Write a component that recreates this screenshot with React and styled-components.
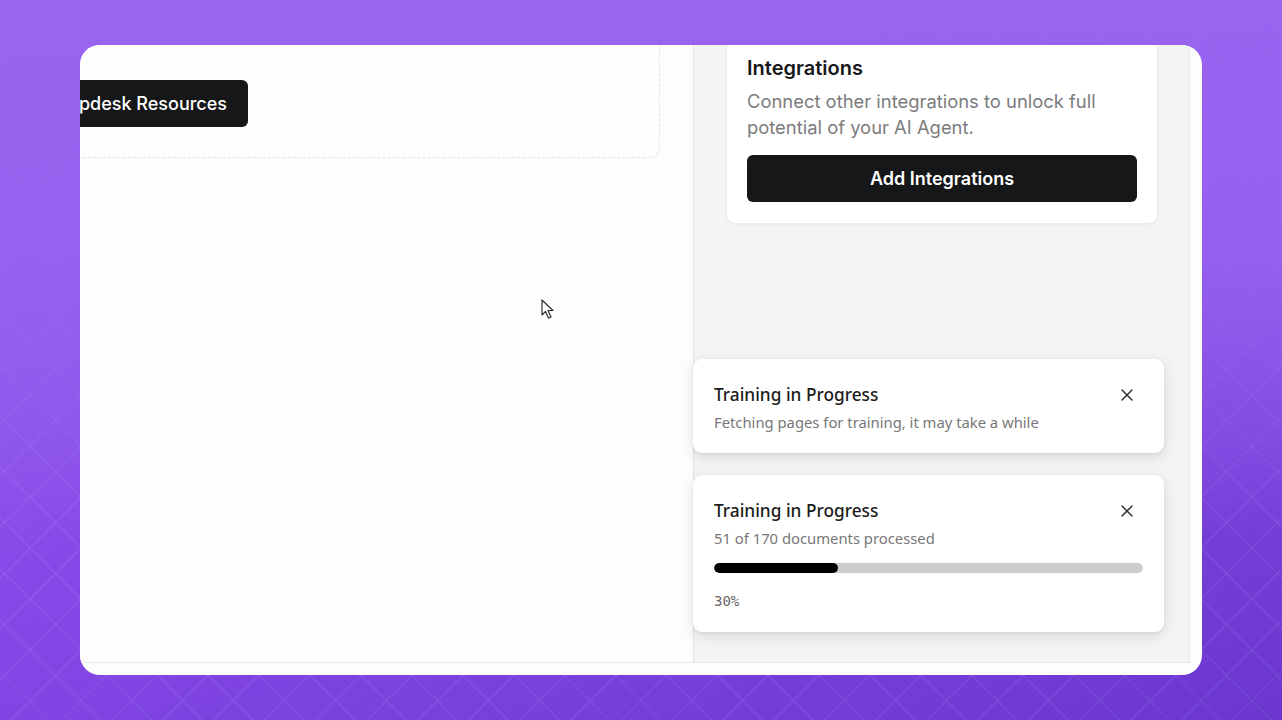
import React from 'react';
import styled, { createGlobalStyle } from 'styled-components';
import { X } from 'lucide-react';

const GlobalStyle = createGlobalStyle`
  html, body {
    margin: 0;
    padding: 0;
    width: 100%;
    height: 100%;
  }
  body {
    font-family: Inter, "Liberation Sans", sans-serif;
    background:
      linear-gradient(to bottom, rgba(152, 100, 240, 1) 0%, rgba(150, 98, 238, 0.92) 35%, rgba(140, 86, 234, 0) 75%),
      repeating-linear-gradient(45deg, transparent 0 34px, rgba(255, 255, 255, 0.05) 34px 36px),
      repeating-linear-gradient(-45deg, transparent 0 34px, rgba(255, 255, 255, 0.05) 34px 36px),
      linear-gradient(160deg, #9a66f0 0%, #8649e8 50%, #6b37cf 100%);
  }
`;

const Stage = styled.div`
  width: 1282px;
  height: 720px;
  padding: 45px 80px;
  box-sizing: border-box;
`;

const Frame = styled.div`
  width: 1122px;
  height: 630px;
  border-radius: 20px;
  background: #fdfdfd;
  overflow: hidden;
`;

const AppWindow = styled.div`
  position: relative;
  width: 1110px;
  height: 618px;
  display: flex;
  border-right: 1px solid #e6e6e6;
  border-bottom: 1px solid #e8e8e8;
  box-sizing: border-box;
  overflow: hidden;
`;

const LeftPanel = styled.div`
  position: relative;
  width: 613px;
  flex-shrink: 0;
  background: #fdfdfd;
`;

const DashedCard = styled.div`
  margin: -60px 33px 0 -100px;
  height: 173px;
  border: 1px dashed #e3e3e3;
  border-radius: 10px;
  box-sizing: border-box;
  display: flex;
  flex-direction: column;
  padding-top: 94px;
`;

const ButtonRow = styled.div`
  width: 267px;
  display: flex;
  justify-content: flex-end;
`;

const DarkButton = styled.button`
  flex-shrink: 0;
  height: 47px;
  padding: 0 21px;
  border: none;
  border-radius: 6px;
  background: #161718;
  color: #ffffff;
  font-family: Inter, "Liberation Sans", sans-serif;
  font-size: 18px;
  font-weight: ${(p) => (p.$full ? 600 : 500)};
  width: ${(p) => (p.$full ? '100%' : 'auto')};
`;

const Cursor = styled.svg`
  position: absolute;
  left: 461px;
  top: 254px;
`;

const RightPanel = styled.div`
  flex: 1;
  background: #f3f4f4;
  border-left: 1px solid #e3e3e3;
  padding: 0 31px 0 32px;
`;

const InfoCard = styled.div`
  margin-top: -20px;
  background: #ffffff;
  border: 1px solid #ececec;
  border-radius: 9px;
  box-shadow: 0 1px 3px rgba(0, 0, 0, 0.04);
  padding: 28px 20px 21px;
  display: flex;
  flex-direction: column;
`;

const CardTitle = styled.h3`
  margin: 0;
  font-size: 20px;
  line-height: 28px;
  font-weight: 600;
  color: #18191a;
`;

const CardText = styled.p`
  margin: 6px 0 15px;
  font-size: 18.4px;
  line-height: 26px;
  color: #7c7c7c;
`;

const ToastStack = styled.div`
  position: absolute;
  left: 613px;
  bottom: 30px;
  width: 471px;
  display: flex;
  flex-direction: column;
  gap: 22px;
`;

const Toast = styled.div`
  position: relative;
  background: #ffffff;
  border-radius: 9px;
  box-shadow: 0 4px 14px rgba(0, 0, 0, 0.12), 0 1px 3px rgba(0, 0, 0, 0.06);
  padding: 23px 21px 20px;
  font-family: "Noto Sans", "Open Sans", sans-serif;
`;

const ToastTitle = styled.div`
  font-size: 17.3px;
  line-height: 26px;
  font-weight: 500;
  color: #1c1c1c;
`;

const ToastText = styled.div`
  margin-top: 3px;
  font-size: 14.8px;
  line-height: 22px;
  color: #777777;
`;

const Close = styled.button`
  position: absolute;
  top: 26px;
  right: 27px;
  padding: 0;
  border: none;
  background: transparent;
  color: #333333;
  display: flex;
`;

const Track = styled.div`
  margin-top: 14px;
  height: 10px;
  border-radius: 5px;
  background: #cdcdcd;
  overflow: hidden;
`;

const Fill = styled.div`
  height: 100%;
  border-radius: 5px;
  background: #000000;
`;

const Percent = styled.div`
  margin-top: 17px;
  font-family: "DejaVu Sans Mono", "Liberation Mono", monospace;
  font-size: 14px;
  line-height: 22px;
  color: #666666;
`;

function App() {
  const done = 51;
  const total = 170;
  const pct = Math.round((done / total) * 100);

  return (
    <>
      <GlobalStyle />
      <Stage>
        <Frame>
          <AppWindow>
            <LeftPanel>
              <DashedCard>
                <ButtonRow>
                  <DarkButton>Helpdesk Resources</DarkButton>
                </ButtonRow>
              </DashedCard>
              <Cursor width="16" height="22" viewBox="0 0 16 22">
                <path
                  d="M1 1 L1 16 L4.5 12.5 L7.5 19 L10 18 L7 11.5 L12 11.5 Z"
                  fill="#ffffff"
                  stroke="#333333"
                  strokeWidth="1.2"
                  strokeLinejoin="round"
                />
              </Cursor>
            </LeftPanel>
            <RightPanel>
              <InfoCard>
                <CardTitle>Integrations</CardTitle>
                <CardText>
                  Connect other integrations to unlock full potential of your AI Agent.
                </CardText>
                <DarkButton $full>Add Integrations</DarkButton>
              </InfoCard>
            </RightPanel>
            <ToastStack>
              <Toast>
                <ToastTitle>Training in Progress</ToastTitle>
                <ToastText>Fetching pages for training, it may take a while</ToastText>
                <Close>
                  <X size={20} strokeWidth={1.8} />
                </Close>
              </Toast>
              <Toast>
                <ToastTitle>Training in Progress</ToastTitle>
                <ToastText>
                  {done} of {total} documents processed
                </ToastText>
                <Track>
                  <Fill style={{ width: `${pct * 0.96}%` }} />
                </Track>
                <Percent>{pct}%</Percent>
                <Close>
                  <X size={20} strokeWidth={1.8} />
                </Close>
              </Toast>
            </ToastStack>
          </AppWindow>
        </Frame>
      </Stage>
    </>
  );
}

export default App;
